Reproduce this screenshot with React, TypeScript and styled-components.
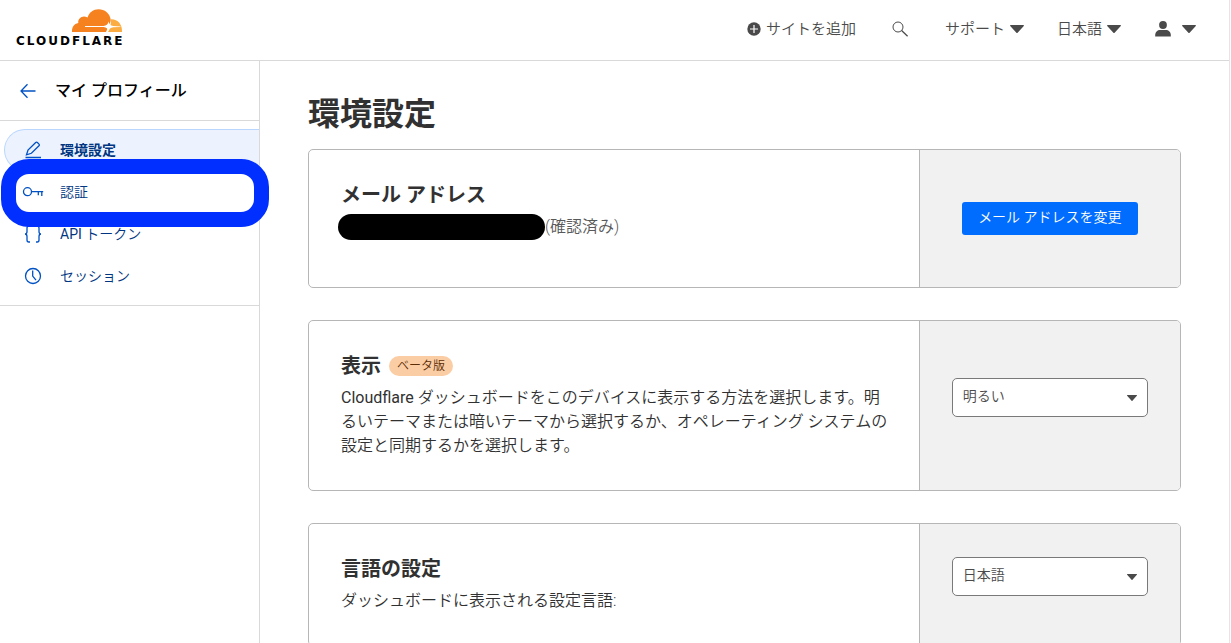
import React from "react";
import styled, { createGlobalStyle } from "styled-components";

const GlobalStyle = createGlobalStyle`
  *, *::before, *::after { box-sizing: border-box; }
  body {
    margin: 0;
    background: #fff;
    color: #313131;
    font-family: Roboto, "Noto Sans CJK JP", sans-serif;
    font-size: 16px;
    line-height: 24px;
  }
  h1, h2, p, ul { margin: 0; padding: 0; }
  button, select { font-family: inherit; }
`;

const Shell = styled.div`
  display: flex;
  flex-direction: column;
  height: 100vh;
  margin-right: 1px;
  border-right: 1px solid #e5e5e5;
  overflow: hidden;
`;

const TopBar = styled.header`
  display: flex;
  align-items: center;
  justify-content: space-between;
  flex: none;
  height: 61px;
  padding: 0 33px 2px 16px;
  border-bottom: 1px solid #d9d9d9;
`;

const LogoLink = styled.a`
  display: block;
  height: 40px;
`;

const Tools = styled.nav`
  display: flex;
  align-items: center;
`;

const ToolButton = styled.button<{ $gap?: number; $before?: number }>`
  display: flex;
  align-items: center;
  gap: ${(p) => p.$gap ?? 5}px;
  margin-left: ${(p) => p.$before ?? 0}px;
  padding: 0;
  border: 0;
  background: none;
  color: #4a4a4a;
  font-size: 15px;
  font-weight: 350;
  line-height: 24px;
  cursor: pointer;
`;

const Body = styled.div`
  display: flex;
  flex: 1;
  min-height: 0;
`;

const Sidebar = styled.aside`
  position: relative;
  flex: none;
  width: 260px;
  border-right: 1px solid #d9d9d9;
`;

const SidebarHead = styled.div`
  display: flex;
  align-items: center;
  gap: 19px;
  height: 60px;
  padding-left: 20px;
  border-bottom: 1px solid #d9d9d9;
  color: #000;
  font-weight: 500;
`;

const BackLink = styled.a`
  display: flex;
  color: #0051c3;
`;

const NavList = styled.ul`
  padding: 8px 0 8px 4px;
  border-bottom: 1px solid #d9d9d9;
  list-style: none;
`;

const NavLink = styled.a<{ $active?: boolean }>`
  display: flex;
  align-items: center;
  gap: 16px;
  height: 42px;
  padding-left: 17px;
  border: 1px solid ${(p) => (p.$active ? "#b9d6ff" : "transparent")};
  border-right: 0;
  border-radius: 21px 0 0 21px;
  background: ${(p) => (p.$active ? "#ecf3ff" : "transparent")};
  color: #003681;
  font-size: 14px;
  font-weight: ${(p) => (p.$active ? 600 : 350)};
  text-decoration: none;

  svg { color: #0051c3; }
`;

const Latin = styled.span`
  font-weight: 400;
`;

const Highlight = styled.div`
  position: absolute;
  top: 98px;
  left: 1px;
  width: 268px;
  height: 68px;
  border: 15px solid #002fff;
  border-radius: 28px;
  pointer-events: none;
`;

const Main = styled.main`
  flex: 1;
  min-width: 0;
  padding: 33px 48px 48px;
  overflow-y: auto;
  scrollbar-width: none;
`;

const PageTitle = styled.h1`
  margin-bottom: 15px;
  font-size: 32px;
  font-weight: 600;
  line-height: 40px;
`;

const Card = styled.section`
  display: grid;
  grid-template-columns: 7fr 3fr;
  margin-bottom: 32px;
  border: 1px solid #b6b6b6;
  border-radius: 5px;
  overflow: hidden;
`;

const CardText = styled.div<{ $roomy?: boolean }>`
  min-width: 0;
  padding: 32px 28px ${(p) => (p.$roomy ? 48 : 32)}px 32px;
`;

const CardTitle = styled.h2`
  display: flex;
  align-items: center;
  gap: 8px;
  margin-bottom: 6px;
  font-size: 20px;
  font-weight: 600;
  line-height: 27px;
`;

const Badge = styled.span`
  margin-bottom: 2px;
  padding: 0 8px;
  border-radius: 10px;
  background: #fbcda5;
  color: #5c2e06;
  font-size: 12px;
  font-weight: 350;
  line-height: 20px;
`;

const Copy = styled.p`
  font-weight: 350;
`;

const EmailRow = styled.div`
  display: flex;
  align-items: center;
  height: 24px;
  color: #595959;
  font-weight: 350;
`;

const Redaction = styled.span`
  flex: none;
  width: 207px;
  height: 26px;
  margin-left: -3px;
  border-radius: 13px;
  background: #000;
`;

const CardAction = styled.div`
  display: flex;
  align-items: center;
  justify-content: center;
  padding: 0 32px;
  border-left: 1px solid #b6b6b6;
  background: #f1f1f1;
`;

const PrimaryButton = styled.button`
  height: 33px;
  padding: 0 16px 3px;
  border: 0;
  border-radius: 3px;
  background: #006dff;
  color: #fff;
  font-size: 14px;
  font-weight: 350;
  line-height: 30px;
  cursor: pointer;
`;

const SelectBox = styled.label`
  display: grid;
  align-items: center;
  flex: 1;
  margin-bottom: 16px;

  > * { grid-area: 1 / 1; }
  > svg { justify-self: end; margin-right: 11px; pointer-events: none; }
`;

const Select = styled.select`
  width: 100%;
  height: 39px;
  padding: 0 32px 3px 10px;
  border: 1px solid #797979;
  border-radius: 5px;
  background: #fff;
  color: #4a4a4a;
  font-size: 14px;
  font-weight: 350;
  appearance: none;
`;

const Caret = ({ width = 14, height = 8 }: { width?: number; height?: number }) => (
  <svg width={width} height={height} viewBox="0 0 14 8" preserveAspectRatio="none" fill="#4a4a4a" aria-hidden="true">
    <path d="M.6 0h12.8c.5 0 .7.5.4.9L7.6 7.7a.8.8 0 0 1-1.2 0L.2.9C-.1.5.1 0 .6 0z" />
  </svg>
);

const Logo = () => (
  <svg width="110" height="40" viewBox="0 0 110 40" role="img" aria-label="Cloudflare">
    <path fill="#f6821f" d="M56 23c-.3-4.700 2-8.300 6.300-9-.8-4.500 4.300-8.500 9.200-5.500C73.300 3.400 77.300.3 82.500.3c6.300 0 11 4.200 12.100 9.700.3 2-.4 4-1.600 6.200L90 23z" />
    <path fill="#fbad41" d="M94.800 10.200C101.500 9.800 106.500 15 106 23H92l2-5.500c.8-2.300 1.200-4.800.8-7.300z" />
    <path fill="#fff" d="M69 16.900h18.500c2.900-.3 4.400-1.500 5-4.500.6 2.900 2 4.100 4.700 4.500l7.300.5v.6l-7.300.3c-2.700.4-4.100 1.700-4.700 4.400-.6-3.100-2.100-4.500-5-4.700H69z" />
    <text x="0" y="36" fontFamily="DejaVu Sans, sans-serif" fontWeight="700" fontSize="12" letterSpacing="2">CLOUDFLARE</text>
  </svg>
);

const icon = {
  width: 22,
  height: 22,
  viewBox: "0 0 22 22",
  fill: "none",
  stroke: "currentColor",
  strokeWidth: 1.3,
  "aria-hidden": true,
} as const;

const PencilIcon = () => (
  <svg {...icon}>
    <path d="M4.500 15.800l1.500-4.800 7.700-7.500a1.200 1.200 0 0 1 1.700 0l1.600 1.600a1.200 1.200 0 0 1 0 1.700L9.400 14.300zM3.500 18.500H19" />
  </svg>
);
const KeyIcon = () => (
  <svg {...icon}>
    <circle cx="5.500" cy="10.700" r="4" />
    <path d="M9.500 10.700h11.700M16.300 10.700v3.500M19.800 10.700v4.300" />
  </svg>
);
const BracesIcon = () => (
  <svg {...icon}>
    <path d="M8 3H6.800Q5 3 5 5v3.500Q5 11 3 11q2 0 2 2.500V17q0 2 1.800 2H8M14 3h1.200Q17 3 17 5v3.500q0 2.500 2 2.500-2 0-2 2.500V17q0 2-1.800 2H14" />
  </svg>
);
const ClockIcon = () => (
  <svg {...icon}>
    <circle cx="11" cy="11" r="7.500" />
    <path d="M10.700 5.500v5.600l3.300 4" />
  </svg>
);

const navItems = [
  { id: "preferences", label: "環境設定", Icon: PencilIcon, active: true },
  { id: "auth", label: "認証", Icon: KeyIcon },
  { id: "tokens", label: <span><Latin>API</Latin> トークン</span>, Icon: BracesIcon },
  { id: "sessions", label: "セッション", Icon: ClockIcon },
];

export default function App() {
  return (
    <Shell lang="ja">
      <GlobalStyle />
      <TopBar>
        <LogoLink href="#"><Logo /></LogoLink>
        <Tools>
          <ToolButton>
            <svg width="14" height="14" viewBox="0 0 14 14" aria-hidden="true">
              <circle cx="7" cy="7" r="6.700" fill="#4a4a4a" />
              <path d="M7 3v8M3 7h8" stroke="#fff" strokeWidth="1.200" />
            </svg>
            サイトを追加
          </ToolButton>
          <ToolButton $before={36} aria-label="検索">
            <svg width="17" height="16" viewBox="0 0 17 16" fill="none" stroke="#4a4a4a" aria-hidden="true">
              <circle cx="6" cy="6" r="5" />
              <path d="M9.600 9.600l6 5.600" strokeWidth="1.300" />
            </svg>
          </ToolButton>
          <ToolButton $before={36}>サポート<Caret /></ToolButton>
          <ToolButton $before={33}>日本語<Caret /></ToolButton>
          <ToolButton $before={34} $gap={11} aria-label="アカウント">
            <svg width="16" height="16" viewBox="0 0 16 16" fill="#4a4a4a" aria-hidden="true">
              <circle cx="8" cy="4" r="3.900" />
              <path d="M.2 15.500V14c0-3 2.300-5 5-5h5.600c2.700 0 5 2 5 5v1.500z" />
            </svg>
            <Caret />
          </ToolButton>
        </Tools>
      </TopBar>
      <Body>
        <Sidebar>
          <SidebarHead>
            <BackLink href="#" aria-label="戻る">
              <svg width="16" height="16" viewBox="0 0 16 16" fill="none" stroke="currentColor" strokeWidth="1.300" aria-hidden="true">
                <path d="M7.500 1.200L1 8l6.500 6.800M1 8h14.500" />
              </svg>
            </BackLink>
            マイ プロフィール
          </SidebarHead>
          <nav>
            <NavList>
              {navItems.map(({ id, label, Icon, active }) => (
                <li key={id}>
                  <NavLink href="#" $active={active}><Icon />{label}</NavLink>
                </li>
              ))}
            </NavList>
          </nav>
          <Highlight />
        </Sidebar>
        <Main>
          <PageTitle>環境設定</PageTitle>
          <Card>
            <CardText $roomy>
              <CardTitle>メール アドレス</CardTitle>
              <EmailRow><Redaction />(確認済み)</EmailRow>
            </CardText>
            <CardAction><PrimaryButton>メール アドレスを変更</PrimaryButton></CardAction>
          </Card>
          <Card>
            <CardText>
              <CardTitle>表示<Badge>ベータ版</Badge></CardTitle>
              <Copy>
                <Latin>Cloudflare</Latin> ダッシュボードをこのデバイスに表示する方法を選択します。明るいテーマまたは暗いテーマから選択するか、オペレーティング システムの設定と同期するかを選択します。
              </Copy>
            </CardText>
            <CardAction>
              <SelectBox>
                <Select aria-label="表示"><option>明るい</option><option>暗い</option></Select>
                <Caret width={10} height={6} />
              </SelectBox>
            </CardAction>
          </Card>
          <Card>
            <CardText>
              <CardTitle>言語の設定</CardTitle>
              <Copy>ダッシュボードに表示される設定言語:</Copy>
            </CardText>
            <CardAction>
              <SelectBox>
                <Select aria-label="言語の設定"><option>日本語</option><option>English</option></Select>
                <Caret width={10} height={6} />
              </SelectBox>
            </CardAction>
          </Card>
        </Main>
      </Body>
    </Shell>
  );
}
